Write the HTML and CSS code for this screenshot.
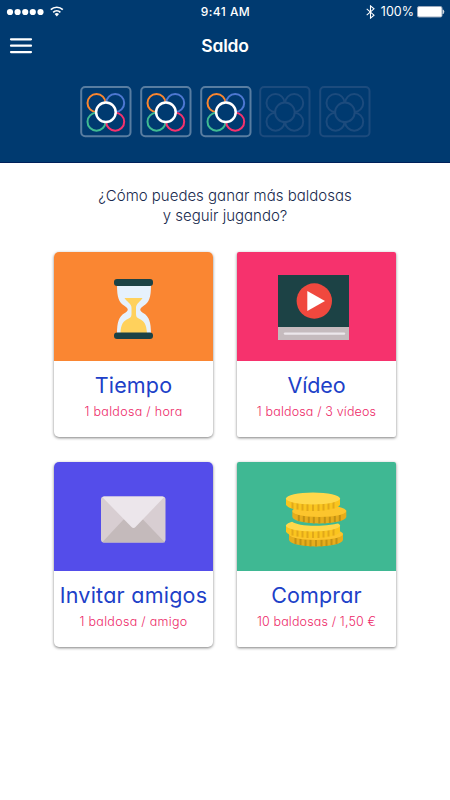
FILE: index.html
```html
<!DOCTYPE html>
<html lang="es">
<head>
<meta charset="utf-8">
<title>Saldo</title>
<link rel="stylesheet" href="styles.css">
</head>
<body>
<svg class="defs" width="0" height="0">
  <defs>
    <symbol id="tile" viewBox="0 0 52 52">
      <rect class="frame" x="1.200" y="1" width="49.300" height="49.300" rx="4"/>
      <circle class="orange" cx="16.500" cy="17" r="9"/>
      <circle class="blue" cx="35.200" cy="17" r="9"/>
      <circle class="green" cx="16.500" cy="35.700" r="9"/>
      <circle class="pink" cx="35.200" cy="35.700" r="9"/>
      <circle class="center" cx="25.900" cy="26.300" r="9.800"/>
    </symbol>
    <symbol id="tile-empty" viewBox="0 0 52 52">
      <g fill="none" stroke="#1c4b7d" stroke-width="2">
        <rect x="1.200" y="1" width="49.300" height="49.300" rx="4"/>
        <circle cx="16.500" cy="17" r="9"/><circle cx="35.200" cy="17" r="9"/>
        <circle cx="16.500" cy="35.700" r="9"/><circle cx="35.200" cy="35.700" r="9"/>
        <circle cx="25.900" cy="26.300" r="9.800" fill="#003a70"/>
      </g>
    </symbol>
  </defs>
</svg>
<header class="top">
  <div class="status">
    <svg class="signal" width="66" height="22" viewBox="0 0 66 22" fill="#fff">
      <circle cx="10" cy="11" r="3.1"/><circle cx="17.6" cy="11" r="3.1"/><circle cx="25.2" cy="11" r="3.1"/><circle cx="32.8" cy="11" r="3.1"/><circle cx="40.5" cy="11" r="3.1"/>
      <g fill="none" stroke="#fff" stroke-width="1.7"><path d="M50.8 8.700a8.6 8.6 0 0 1 12 0M53.2 11.300a5.2 5.2 0 0 1 7.2 0"/></g>
      <path d="M54.600 12.900a3.300 3.300 0 0 1 4.400 0l-2.200 2.500z"/>
    </svg>
    <span class="time">9:41 AM</span>
    <span class="power">
      <svg width="9" height="14" viewBox="0 0 9 14" fill="none" stroke="#fff" stroke-width="1.1"><path d="M.7 3.8 8 10.2 4.5 13.1V.9L8 3.8.7 10.2"/></svg>
      <span class="pct">100%</span>
      <svg width="28" height="12" viewBox="0 0 28 12"><rect x=".5" y=".5" width="24.5" height="10.5" rx="1.5" fill="#fff" stroke="#9aa9bd"/><path d="M26 3.8q2 2 0 4z" fill="#fff" stroke="#c6d0db" stroke-width=".8"/></svg>
    </span>
  </div>
  <div class="nav">
    <svg class="menu" width="24" height="18" viewBox="0 0 24 18" stroke="#fff" stroke-width="2.2" stroke-linecap="round"><path d="M2 2.3h20M2 8.7h20M2 15.1h20"/></svg>
    <h1>Saldo</h1>
  </div>
  <div class="tiles">
    <svg><use href="#tile"/></svg><svg><use href="#tile"/></svg><svg><use href="#tile"/></svg><svg><use href="#tile-empty"/></svg><svg><use href="#tile-empty"/></svg>
  </div>
</header>
<main>
  <p class="question">¿Cómo puedes ganar más baldosas<br>y seguir jugando?</p>
  <div class="cards">
    <section class="card">
      <div class="art time-art">
        <svg width="159" height="109" viewBox="0 0 159 109">
          <path d="M63 33h34c0 13-2 17-7 20.500-5 3.500-5 5 0 8 5 3.500 7 8 7 20.500H63c0-12.500 2-17 7-20.500 5-3 5-4.500 0-8-5-3.500-7-7.500-7-20.500z" fill="#e6f1fc"/>
          <path d="M70.500 46h18c-2 4-6.500 5-6.500 10v6c0 8 10 1 11 19H66.500c1-18 11-11 11-19v-6c0-5-5-6-7-10z" fill="#ffd15c"/>
          <rect x="60" y="27" width="39" height="7" rx="3" fill="#1c4245"/><rect x="60" y="80.5" width="39" height="6.5" rx="3" fill="#1c4245"/>
        </svg>
      </div>
      <h2>Tiempo</h2><p class="wide">1 baldosa / hora</p>
    </section>
    <section class="card square">
      <div class="art video-art">
        <svg width="159" height="109" viewBox="0 0 159 109">
          <path d="M41 23h71v52H41z" fill="#1c4245"/><path d="M41 75h71v13H41z" fill="#c5bbbe"/>
          <path d="M48 81.6h59" stroke="#ece7eb" stroke-width="2.4" stroke-linecap="round"/>
          <circle cx="77.3" cy="49" r="17.7" fill="#f0483e"/><path d="M70.3 39v20L88 49z" fill="#fff"/>
        </svg>
      </div>
      <h2 class="narrow">Vídeo</h2><p>1 baldosa / 3 vídeos</p>
    </section>
    <section class="card">
      <div class="art mail-art">
        <svg width="159" height="109" viewBox="0 0 159 109">
          <rect x="47" y="34.5" width="64.5" height="46" rx="3" fill="#d8ced2"/>
          <path d="M48.500 80 69.500 57.500h19.500l22 23H50q-1 0-1.500-.5z" fill="#c4babb"/>
          <path d="M48.500 35.300q.7-.8 1.700-.8h58q1 0 1.800.8L81.500 65q-2 2-4 0z" fill="#ece6eb"/>
        </svg>
      </div>
      <h2 class="long">Invitar amigos</h2><p class="wide">1 baldosa / amigo</p>
    </section>
    <section class="card square">
      <div class="art coin-art">
        <svg width="159" height="109" viewBox="0 0 159 109">
          <defs>
            <symbol id="coin" viewBox="0 0 56 20" overflow="visible">
              <path d="M.5 6v6.500c2 8.500 52 8.500 54 0V6z" fill="var(--side)"/>
              <path d="M7 10v6.500M12 11v6.500M17 12v6.500M22 12v7M27.500 12v7M33 12v7M38 12v6.500M43 11v6.500M48 10v6.500" stroke="var(--rib)" stroke-width="2"/>
              <ellipse cx="27.500" cy="6.500" rx="27" ry="6" fill="var(--top)"/>
            </symbol>
          </defs>
          <use class="coin-dark" href="#coin" x="51.500" y="65.500" width="56" height="20"/>
          <use class="coin-light" href="#coin" x="48.500" y="57" width="56" height="20"/>
          <path d="M55 50v9.500c5 5 35 6.500 52 0V50z" fill="#3fb893"/>
          <use class="coin-dark" href="#coin" x="54.800" y="42.500" width="56" height="20"/>
          <use class="coin-light" href="#coin" x="48.500" y="30" width="56" height="20"/>
        </svg>
      </div>
      <h2>Comprar</h2><p>10 baldosas / 1,50 €</p>
    </section>
  </div>
</main>
</body>
</html>
```

FILE: styles.css
```css
* { box-sizing: border-box; }
body { margin: 0; width: 450px; height: 800px; overflow: hidden; background: #fff; font-family: Inter, "Liberation Sans", sans-serif; font-feature-settings: "cv11"; }
h1, h2, p { margin: 0; }
svg { display: block; flex: none; }
.defs { position: absolute; }
.top { height: 163px; background: #003a70; border-bottom: 1px solid #00205a; color: #fff; }
.status { display: grid; grid-template-columns: 1fr auto 1fr; height: 23px; align-items: center; }
.time { font-size: 12px; font-weight: 500; letter-spacing: .45px; padding-left: 1px; }
.power { display: flex; align-items: center; justify-content: flex-end; padding-right: 5px; }
.pct { font-size: 12.5px; margin: 0 3px 0 6px; }
.nav { display: grid; grid-template-columns: 1fr auto 1fr; height: 46px; align-items: center; padding-left: 9px; padding-right: 9px; }
h1 { font-size: 17.500px; font-weight: 600; letter-spacing: -.2px; line-height: 22px; padding-bottom: 1px; }
.tiles { display: flex; gap: 7.800px; padding: 17px 0 0 80px; }
.tiles svg { width: 52px; height: 52px; }
.frame { fill: none; stroke: #587da1; stroke-width: 2; }
.orange, .blue, .green, .pink, .center { fill: none; stroke-width: 2; }
.orange { stroke: #fa862f; }
.blue { stroke: #4d78d2; }
.green { stroke: #3fba92; }
.pink { stroke: #f6326d; }
.center { fill: #003a70; stroke: #fff; stroke-width: 2.500px; }
.question { margin-top: 23px; text-align: center; font-size: 15px; line-height: 20px; color: #17294d; font-weight: 300; }
.cards { display: grid; grid-template-columns: 159px 159px; gap: 25px 24px; justify-content: center; padding-top: 26px; }
.card { height: 185px; background: #fff; border-radius: 5px; overflow: hidden; text-align: center; box-shadow: 0 1px 3px rgba(0,0,0,.5); white-space: nowrap; }
.square { border-radius: 2px; }
.art { height: 109px; }
.time-art { background: #fa8632; }
.video-art { background: #f6326d; }
.mail-art { background: #544dea; }
.coin-art { background: #3fb893; }
.card h2 { font-size: 21.500px; font-weight: 400; line-height: 28px; margin-top: 10px; color: #203fc8; letter-spacing: .15px; }
.card .long { letter-spacing: .25px; }
.card .narrow { letter-spacing: -.1px; }
.card p { font-size: 12.500px; font-weight: 300; line-height: 16px; margin-top: 5px; color: #ed2868; letter-spacing: .15px; }
.card .wide { letter-spacing: .3px; }
.coin-dark { --side: #e7ad1b; --rib: #c29214; --top: #fcc52d; }
.coin-light { --side: #fac51e; --rib: #e1a81a; --top: #ffd84b; }
```
